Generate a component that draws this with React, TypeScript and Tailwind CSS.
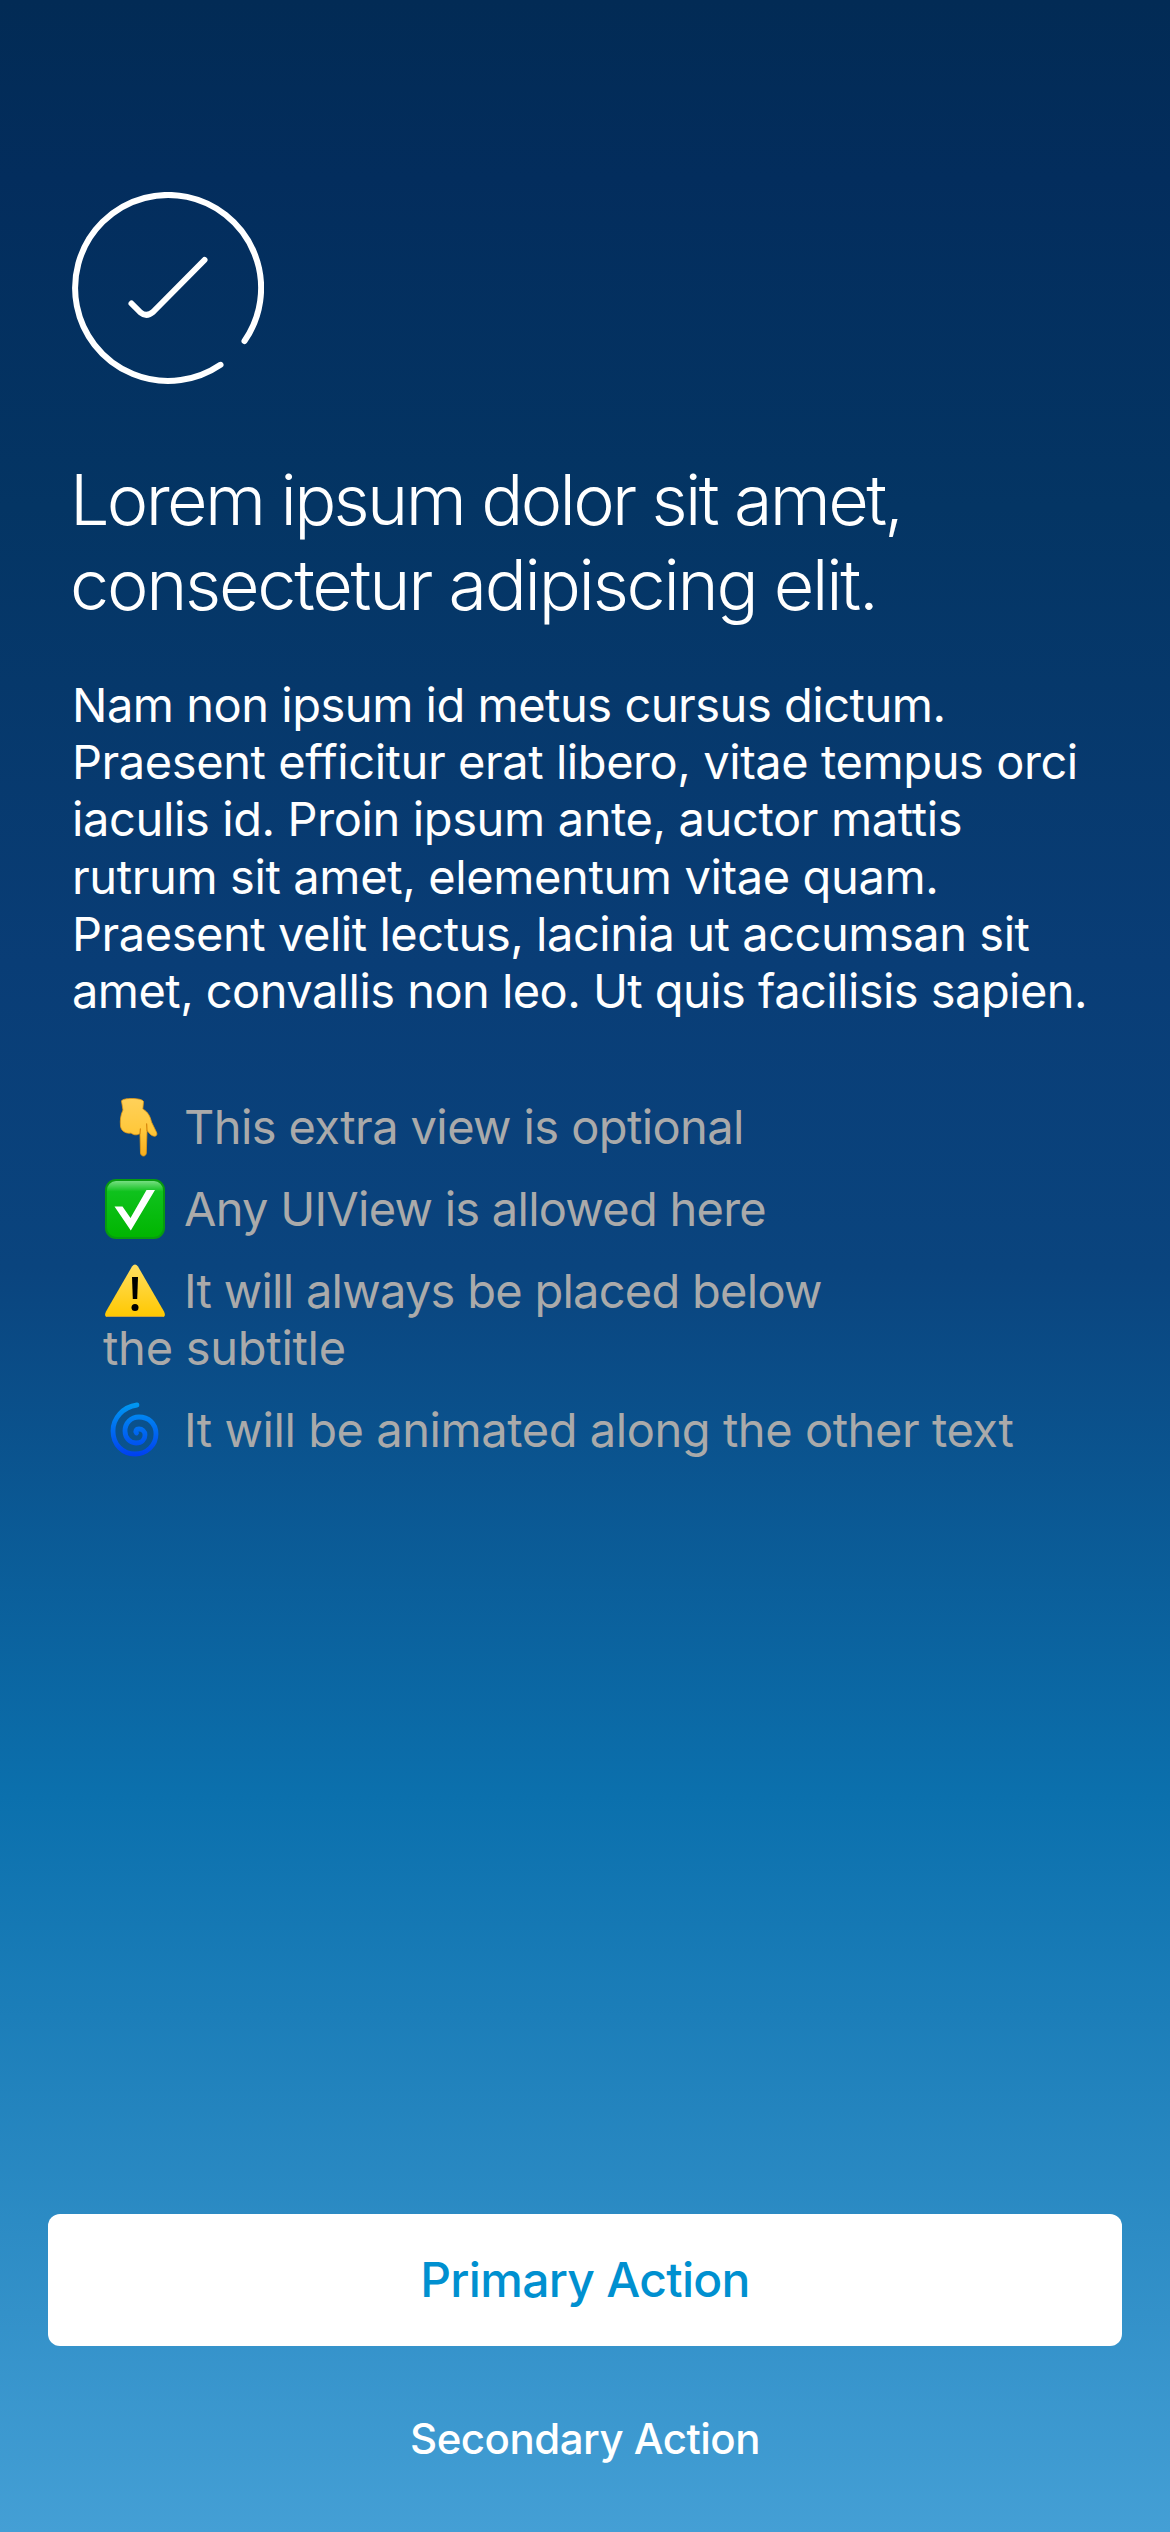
import React from "react";

function CheckCircle() {
  return (
    <svg className="block size-[192px]" viewBox="0 0 192 192" fill="none" stroke="white" strokeWidth="6" strokeLinecap="round" strokeLinejoin="round">
      <path d="M172.5 149 A93 93 0 1 0 148.5 172.8" />
      <path d="M59.5 111.5 L68.5 120.5 Q74.5 125.5 81 120 L132.5 68" />
    </svg>
  );
}

function Hand() {
  return (
    <svg className="inline-block size-[60px]" viewBox="0 0 60 60">
      <defs>
        <linearGradient id="hand" x1="0" y1="0" x2="0" y2="1">
          <stop offset="0" stopColor="#ffd15a" />
          <stop offset=".55" stopColor="#ffc83c" />
          <stop offset="1" stopColor="#f9ae1c" />
        </linearGradient>
      </defs>
      <path d="M16.500 4 C17 .6 37.500 .6 38.500 4.500 L37.800 12 C43 15 45 19 46.500 25 L51.800 36 C52.500 40 48.500 40 45.500 37.500 L42 33.500 L41.300 56 C41 60 36 60 35.500 56 L35 36.500 C31 39 28 37.500 26 36 C21 37 16 34 15.500 29 C15 23 15.500 18 18 13 Z" fill="url(#hand)" stroke="#e79a13" strokeWidth=".8" />
      <path d="M42 33.500 L41.600 27 M35 36.500 L35.400 32" stroke="#d98a10" strokeWidth="1.300" strokeLinecap="round" />
    </svg>
  );
}

function CheckBox() {
  return (
    <svg className="inline-block size-[60px]" viewBox="0 0 60 60">
      <defs>
        <linearGradient id="box" x1="0" y1="0" x2="0" y2="1">
          <stop offset="0" stopColor="#7fe08a" />
          <stop offset=".2" stopColor="#0fc21d" />
          <stop offset="1" stopColor="#00b500" />
        </linearGradient>
      </defs>
      <rect x="1" y="1" width="58" height="58" rx="10" fill="url(#box)" stroke="#079a10" strokeWidth="2" />
      <path d="M9.500 27.500 H17.500 L25.500 39 L41.500 11 H50 L25.800 51.500 Z" fill="white" />
    </svg>
  );
}

function Warning() {
  return (
    <svg className="inline-block size-[60px]" viewBox="0 0 60 60">
      <defs>
        <linearGradient id="warn" x1="0" y1="0" x2="0" y2="1">
          <stop offset="0" stopColor="#ffde60" />
          <stop offset="1" stopColor="#ffc800" />
        </linearGradient>
      </defs>
      <path d="M27 5.500 Q30 1.500 33 5.500 L59 50.500 Q61.500 56 57 56 H3 Q-1.500 56 1 50.500 Z" fill="url(#warn)" />
      <path d="M2 55.500 H58" stroke="#c9a13a" strokeWidth="1" />
      <path d="M27 16 H33 L32.200 38 H27.800 Z" fill="black" />
      <circle cx="30" cy="46.500" r="3.500" fill="black" />
    </svg>
  );
}

function Cyclone() {
  return (
    <svg className="inline-block size-[60px]" viewBox="0 0 60 60" fill="none" strokeLinecap="round">
      <defs>
        <linearGradient id="swirl" gradientUnits="userSpaceOnUse" x1="0" y1="3" x2="0" y2="57">
          <stop offset="0" stopColor="#0099f2" />
          <stop offset="1" stopColor="#003ef0" />
        </linearGradient>
      </defs>
      <path
        d="M32 5 C18 7 8 18 8 31 C8 45 18 54 30 54 C42 54 51 45 51 34 C51 23 43 17 34 17 C26 17 20 23 20 31 C20 38 25 43 31 43 C37 43 40 39 40 35 C40 31 37 29 34 29 C31 29 30 31 31.500 33"
        stroke="url(#swirl)"
        strokeWidth="4.800"
      />
    </svg>
  );
}

export default function App() {
  return (
    <main className="flex h-[2532px] w-[1170px] flex-col bg-[linear-gradient(180deg,#022b55_0%,#032d5d_7%,#043564_20%,#093d76_38%,#0a447e_50%,#0b70ad_71%,#449fd5_100%)] pt-[192px] font-['Inter',sans-serif] text-white">
      <div className="pl-[72px]">
        <CheckCircle />
        <h1 className="mt-[73px] -ml-0.5 flex flex-col text-[70px] leading-[85px] font-[330] whitespace-nowrap">
          <span className="tracking-[-2.65px]">Lorem ipsum dolor sit amet,</span>
          <span className="tracking-[-2.250px]">consectetur adipiscing elit.</span>
        </h1>
        <p className="mt-[49px] flex flex-col text-[47px] leading-[57.200px] whitespace-nowrap">
          <span className="tracking-[-0.48px]">Nam non ipsum id metus cursus dictum.</span>
          <span className="tracking-[-0.43px]">Praesent efficitur erat libero, vitae tempus orci</span>
          <span className="tracking-[-0.38px]">iaculis id. Proin ipsum ante, auctor mattis</span>
          <span className="tracking-[-0.38px]">rutrum sit amet, elementum vitae quam.</span>
          <span className="tracking-[-0.46px]">Praesent velit lectus, lacinia ut accumsan sit</span>
          <span className="tracking-[-0.55px]">amet, convallis non leo. Ut quis facilisis sapien.</span>
        </p>
      </div>
      <ul className="mt-[79px] flex flex-col gap-[25px] pl-[105px] text-[47px] leading-[57px] whitespace-nowrap text-[#aaaaaa]">
        <li className="flex h-[57px] items-center gap-[19px] tracking-[-0.6px]"><Hand />This extra view is optional</li>
        <li className="flex h-[57px] items-center gap-[19px] tracking-[-0.74px]"><CheckBox />Any UIView is allowed here</li>
        <li>
          <div className="flex h-[57px] items-center gap-[19px] tracking-[-0.73px]"><Warning />It will always be placed below</div>
          <div className="-ml-0.5 tracking-[-0.27px]">the subtitle</div>
        </li>
        <li className="flex h-[57px] items-center gap-[19px] tracking-[-0.44px]"><Cyclone />It will be animated along the other text</li>
      </ul>
      <div className="mt-auto flex flex-col items-center px-12 pb-[64px]">
        <button className="h-[132px] w-full rounded-xl bg-white text-[48px] font-medium tracking-[-0.7px] text-[#0090d0]">Primary Action</button>
        <button className="mt-[64px] h-[58px] text-[42px] leading-[58px] font-medium tracking-[-0.5px]">Secondary Action</button>
      </div>
    </main>
  );
}
